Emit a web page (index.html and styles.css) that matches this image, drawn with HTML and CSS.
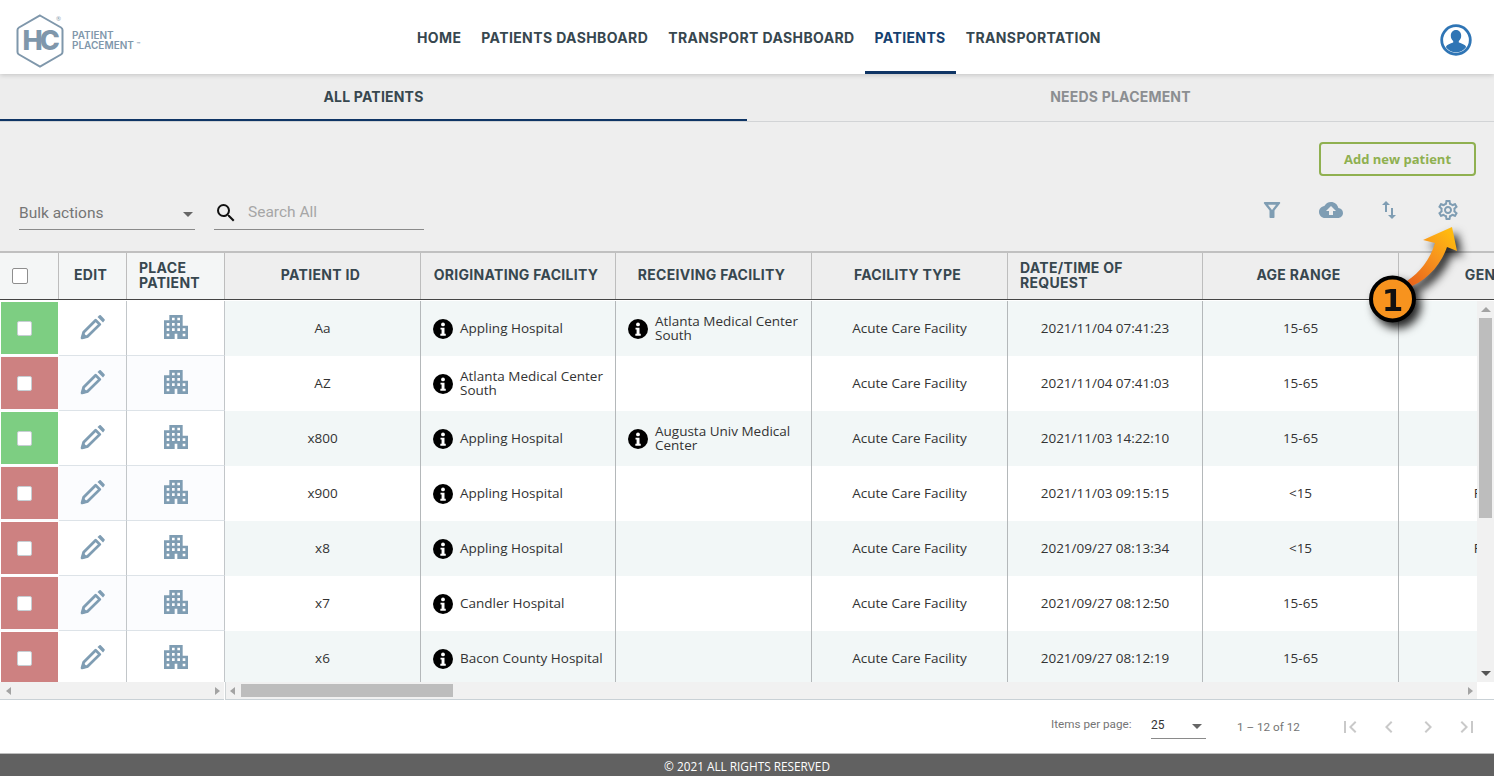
FILE: index.html
```html
<!DOCTYPE html>
<html lang="en">
<head>
<meta charset="utf-8">
<title>Patient Placement</title>
<link rel="stylesheet" href="styles.css">
</head>
<body>
<svg class="defs" width="0" height="0" aria-hidden="true">
  <symbol id="pencil" viewBox="0 0 24 24"><path d="M2 22l1.500-5.400L15 5l4 4L7.400 20.500z" fill="none" stroke="currentColor" stroke-width="2.700" stroke-linejoin="round"/><path d="M16.800 1.800L18.700.3c.4-.3.900-.3 1.200 0l3.700 3.700c.3.300.3.800 0 1.200l-1.500 1.900z" fill="currentColor"/><path d="M.8 23.200l1.800-6.700 4.900 4.900z" fill="currentColor"/></symbol>
  <symbol id="building" viewBox="3 3 18 18"><path d="M17 11V3H7v4H3v14h8v-4h2v4h8V11h-4zM7 19H5v-2h2v2zm0-4H5v-2h2v2zm0-4H5V9h2v2zm4 4H9v-2h2v2zm0-4H9V9h2v2zm0-4H9V5h2v2zm4 8h-2v-2h2v2zm0-4h-2V9h2v2zm0-4h-2V5h2v2zm4 12h-2v-2h2v2zm0-4h-2v-2h2v2z" fill="currentColor"/></symbol>
  <symbol id="info" viewBox="0 0 24 24"><circle cx="12" cy="12" r="12" fill="#000"/><circle cx="12" cy="6.500" r="2.300" fill="#fff"/><path d="M9 10.500h4.800v7.300H15.300v2.200H8.800v-2.200h1.500v-5.100H9z" fill="#fff"/></symbol>
</svg>

<header class="topbar">
  <div class="brand">
    <svg class="brand-mark" viewBox="0 0 48 54" aria-hidden="true">
      <path d="M24 1.500L45 13.500c1 .6 1.500 1.400 1.500 2.500v22c0 1.100-.5 1.900-1.500 2.500L24 52.500 3 40.500C2 39.900 1.500 39.100 1.500 38V16c0-1.100.5-1.900 1.500-2.500z" fill="none" stroke="#7f97ab" stroke-width="2"/>
      <text x="6.500" y="35.500" class="brand-hc">HC</text>
    </svg>
    <span class="brand-reg">®</span>
    <div class="brand-name"><span>PATIENT</span><span>PLACEMENT <small>™</small></span></div>
  </div>
  <nav class="nav">
    <a class="nav-item">HOME</a>
    <a class="nav-item">PATIENTS DASHBOARD</a>
    <a class="nav-item">TRANSPORT DASHBOARD</a>
    <a class="nav-item active">PATIENTS</a>
    <a class="nav-item">TRANSPORTATION</a>
  </nav>
  <svg class="avatar" viewBox="0 0 32 32" aria-hidden="true">
    <circle cx="16" cy="16" r="14.300" fill="#fff" stroke="#2f75b5" stroke-width="2.800"/>
    <path d="M16 6c-3.200 0-5.200 2.500-5.200 5.700 0 2.300 1 4.200 2.400 5.300v1.500c-2.800 1-6.300 1.900-7.400 4.500A12.800 12.800 0 0 0 16 28.500a12.800 12.800 0 0 0 10.200-5.500c-1.100-2.600-4.600-3.500-7.400-4.500V17c1.400-1.100 2.400-3 2.400-5.300C21.200 8.500 19.200 6 16 6z" fill="#2f75b5"/>
  </svg>
</header>

<div class="tabs">
  <div class="tab active">ALL PATIENTS</div>
  <div class="tab">NEEDS PLACEMENT</div>
</div>

<section class="toolbar">
  <div class="toolbar-top"><button class="add-btn">Add new patient</button></div>
  <div class="toolbar-row">
    <div class="bulk"><span>Bulk actions</span><i class="caret"></i></div>
    <div class="search">
      <svg class="search-icon" viewBox="0 0 24 24" aria-hidden="true"><path d="M15.500 14h-.79l-.28-.27A6.470 6.470 0 0 0 16 9.500 6.500 6.500 0 1 0 9.500 16c1.610 0 3.090-.59 4.230-1.570l.27.28v.79l5 4.990L20.490 19l-4.990-5zm-6 0C7.010 14 5 11.990 5 9.500S7.010 5 9.500 5 14 7.010 14 9.500 11.990 14 9.500 14z" fill="#111"/></svg>
      <span>Search All</span>
    </div>
    <div class="tools">
      <svg class="tool" viewBox="0 0 24 24" aria-hidden="true"><path fill-rule="evenodd" d="M4.700 4h14.600c.8 0 1.200.9.700 1.500L14.500 12.500V19c0 .6-.4 1-1 1h-3c-.6 0-1-.4-1-1v-6.500L4 5.500C3.500 4.900 3.900 4 4.700 4zM8 6.800l4 5.100 4-5.100z"/></svg>
      <svg class="tool" viewBox="0 0 24 24" aria-hidden="true"><path d="M19.350 10.040C18.670 6.590 15.640 4 12 4 9.110 4 6.600 5.640 5.350 8.040 2.340 8.360 0 10.910 0 14c0 3.310 2.690 6 6 6h13c2.760 0 5-2.240 5-5 0-2.640-2.050-4.780-4.650-4.960zM14 13v4h-4v-4H7l5-5 5 5h-3z"/></svg>
      <svg class="tool" viewBox="0 0 24 24" aria-hidden="true"><path d="M16 17.010V10h-2v7.010h-3L15 21l4-3.990h-3zM9 3L5 6.990h3V14h2V6.990h3L9 3z"/></svg>
      <svg class="tool" viewBox="0 0 24 24" aria-hidden="true"><path d="M19.430 12.980c.04-.32.07-.64.07-.98 0-.34-.03-.66-.07-.98l2.110-1.650c.19-.15.24-.42.12-.64l-2-3.460c-.09-.16-.26-.25-.44-.25-.06 0-.12.01-.17.03l-2.490 1c-.52-.4-1.080-.73-1.690-.98l-.38-2.650C14.460 2.180 14.250 2 14 2h-4c-.25 0-.46.18-.49.42l-.38 2.650c-.61.25-1.170.59-1.690.98l-2.490-1c-.06-.02-.12-.03-.18-.03-.17 0-.34.09-.43.25l-2 3.460c-.13.22-.07.49.12.64l2.110 1.650c-.04.32-.07.65-.07.98 0 .33.03.66.07.98l-2.110 1.650c-.19.15-.24.42-.12.64l2 3.460c.09.16.26.25.44.25.06 0 .12-.01.17-.03l2.490-1c.52.4 1.080.73 1.690.98l.38 2.650c.03.24.24.42.49.42h4c.25 0 .46-.18.49-.42l.38-2.650c.61-.25 1.170-.59 1.690-.98l2.490 1c.06.02.12.03.18.03.17 0 .34-.09.43-.25l2-3.460c.12-.22.07-.49-.12-.64l-2.110-1.650zm-1.980-1.710c.04.31.05.52.05.73 0 .21-.02.43-.05.73l-.14 1.130.89.7 1.080.84-.7 1.210-1.270-.51-1.040-.42-.9.68c-.43.32-.84.56-1.250.73l-1.060.43-.16 1.130-.2 1.350h-1.400l-.19-1.350-.16-1.130-1.060-.43c-.43-.18-.83-.41-1.230-.71l-.91-.7-1.060.43-1.270.51-.7-1.210 1.080-.84.89-.7-.14-1.130c-.03-.31-.05-.54-.05-.74s.02-.43.05-.73l.14-1.130-.89-.7-1.080-.84.7-1.210 1.270.51 1.040.42.9-.68c.43-.32.84-.56 1.250-.73l1.060-.43.16-1.130.2-1.350h1.390l.19 1.350.16 1.130 1.060.43c.43.18.83.41 1.230.71l.91.7 1.060-.43 1.270-.51.7 1.210-1.070.85-.89.7.14 1.130zM12 8c-2.210 0-4 1.790-4 4s1.790 4 4 4 4-1.790 4-4-1.790-4-4-4zm0 6c-1.100 0-2-.9-2-2s.9-2 2-2 2 .9 2 2-.9 2-2 2z"/></svg>
    </div>
  </div>
</section>

<section class="table">
  <div class="frozen">
    <div class="fz-row head">
      <div class="th fz check-cell"><input class="check head-check" type="checkbox"></div>
      <div class="th fz">EDIT</div>
      <div class="th fz left">PLACE PATIENT</div>
    </div>
    <div class="fz-body">
      <div class="fz-row"><div class="status ok"><input class="check" type="checkbox"></div><div class="act"><svg class="ic-pencil"><use href="#pencil"/></svg></div><div class="act"><svg class="ic-building"><use href="#building"/></svg></div></div>
      <div class="fz-row alt"><div class="status bad"><input class="check" type="checkbox"></div><div class="act"><svg class="ic-pencil"><use href="#pencil"/></svg></div><div class="act"><svg class="ic-building"><use href="#building"/></svg></div></div>
      <div class="fz-row"><div class="status ok"><input class="check" type="checkbox"></div><div class="act"><svg class="ic-pencil"><use href="#pencil"/></svg></div><div class="act"><svg class="ic-building"><use href="#building"/></svg></div></div>
      <div class="fz-row alt"><div class="status bad"><input class="check" type="checkbox"></div><div class="act"><svg class="ic-pencil"><use href="#pencil"/></svg></div><div class="act"><svg class="ic-building"><use href="#building"/></svg></div></div>
      <div class="fz-row"><div class="status bad"><input class="check" type="checkbox"></div><div class="act"><svg class="ic-pencil"><use href="#pencil"/></svg></div><div class="act"><svg class="ic-building"><use href="#building"/></svg></div></div>
      <div class="fz-row alt"><div class="status bad"><input class="check" type="checkbox"></div><div class="act"><svg class="ic-pencil"><use href="#pencil"/></svg></div><div class="act"><svg class="ic-building"><use href="#building"/></svg></div></div>
      <div class="fz-row"><div class="status bad"><input class="check" type="checkbox"></div><div class="act"><svg class="ic-pencil"><use href="#pencil"/></svg></div><div class="act"><svg class="ic-building"><use href="#building"/></svg></div></div>
    </div>
    <div class="hbar short"><i class="tri l"></i><i class="tri r"></i></div>
  </div>

  <div class="main">
    <div class="m-row head">
      <div class="th">PATIENT ID</div>
      <div class="th">ORIGINATING FACILITY</div>
      <div class="th">RECEIVING FACILITY</div>
      <div class="th">FACILITY TYPE</div>
      <div class="th left">DATE/TIME OF REQUEST</div>
      <div class="th">AGE RANGE</div>
      <div class="th">GENDER</div>
    </div>
    <div class="m-body">
      <div class="viewport">
        <div class="m-row"><div class="td">Aa</div><div class="td fac"><svg class="ic-info"><use href="#info"/></svg><span>Appling Hospital</span></div><div class="td fac"><svg class="ic-info"><use href="#info"/></svg><span>Atlanta Medical Center South</span></div><div class="td">Acute Care Facility</div><div class="td">2021/11/04 07:41:23</div><div class="td">15-65</div><div class="td">Male</div></div>
        <div class="m-row alt"><div class="td">AZ</div><div class="td fac"><svg class="ic-info"><use href="#info"/></svg><span>Atlanta Medical Center South</span></div><div class="td fac"></div><div class="td">Acute Care Facility</div><div class="td">2021/11/04 07:41:03</div><div class="td">15-65</div><div class="td">Male</div></div>
        <div class="m-row"><div class="td">x800</div><div class="td fac"><svg class="ic-info"><use href="#info"/></svg><span>Appling Hospital</span></div><div class="td fac"><svg class="ic-info"><use href="#info"/></svg><span>Augusta Univ Medical Center</span></div><div class="td">Acute Care Facility</div><div class="td">2021/11/03 14:22:10</div><div class="td">15-65</div><div class="td">Male</div></div>
        <div class="m-row alt"><div class="td">x900</div><div class="td fac"><svg class="ic-info"><use href="#info"/></svg><span>Appling Hospital</span></div><div class="td fac"></div><div class="td">Acute Care Facility</div><div class="td">2021/11/03 09:15:15</div><div class="td">&lt;15</div><div class="td">Female</div></div>
        <div class="m-row"><div class="td">x8</div><div class="td fac"><svg class="ic-info"><use href="#info"/></svg><span>Appling Hospital</span></div><div class="td fac"></div><div class="td">Acute Care Facility</div><div class="td">2021/09/27 08:13:34</div><div class="td">&lt;15</div><div class="td">Female</div></div>
        <div class="m-row alt"><div class="td">x7</div><div class="td fac"><svg class="ic-info"><use href="#info"/></svg><span>Candler Hospital</span></div><div class="td fac"></div><div class="td">Acute Care Facility</div><div class="td">2021/09/27 08:12:50</div><div class="td">15-65</div><div class="td">Male</div></div>
        <div class="m-row"><div class="td">x6</div><div class="td fac"><svg class="ic-info"><use href="#info"/></svg><span>Bacon County Hospital</span></div><div class="td fac"></div><div class="td">Acute Care Facility</div><div class="td">2021/09/27 08:12:19</div><div class="td">15-65</div><div class="td">Male</div></div>
      </div>
      <div class="vbar"><i class="tri u"></i><div class="vthumb"></div><i class="tri d"></i></div>
    </div>
    <div class="hbar-wrap">
      <div class="hbar"><i class="tri l"></i><div class="hthumb"></div><i class="tri r"></i></div>
    </div>
  </div>
</section>

<section class="paginator">
  <span class="pg-label">Items per page:</span>
  <div class="pg-select"><span>25</span><i class="caret"></i></div>
  <span class="pg-range">1 – 12 of 12</span>
  <div class="pg-btns">
    <svg class="pg-btn" viewBox="0 0 24 24" aria-hidden="true"><path d="M18.410 16.590L13.820 12l4.590-4.590L17 6l-6 6 6 6zM6 6h2v12H6z"/></svg>
    <svg class="pg-btn" viewBox="0 0 24 24" aria-hidden="true"><path d="M15.410 7.410L14 6l-6 6 6 6 1.410-1.410L10.830 12z"/></svg>
    <svg class="pg-btn" viewBox="0 0 24 24" aria-hidden="true"><path d="M10 6L8.590 7.410 13.170 12l-4.580 4.590L10 18l6-6z"/></svg>
    <svg class="pg-btn" viewBox="0 0 24 24" aria-hidden="true"><path d="M5.590 7.410L10.180 12l-4.590 4.590L7 18l6-6-6-6zM16 6h2v12h-2z"/></svg>
  </div>
</section>

<footer class="footer">© 2021 ALL RIGHTS RESERVED</footer>

<svg class="callout" viewBox="0 0 110 110" aria-hidden="true">
  <defs>
    <linearGradient id="arrowfill" x1="0.1" y1="1" x2="0.85" y2="0.1">
      <stop offset="0" stop-color="#e8641b"/>
      <stop offset="0.55" stop-color="#f7931e"/>
      <stop offset="1" stop-color="#ffb90f"/>
    </linearGradient>
  </defs>
  <g class="callout-shadow">
    <path d="M92 7L63 20l12 3C70 40 60 52 47 61l5 5C70 58 82 42 87 27l10 4z" fill="url(#arrowfill)"/>
    <circle cx="32.500" cy="79" r="21.500" fill="#f7931e" stroke="#000" stroke-width="4"/>
    <text x="32.500" y="90.500" class="callout-num">1</text>
  </g>
</svg>
</body>
</html>
```
FILE: styles.css
```css
* { box-sizing: border-box; }
html, body { margin: 0; height: 100%; }
body {
  height: 776px;
  overflow: hidden;
  display: flex;
  flex-direction: column;
  font-family: "Open Sans", "Liberation Sans", sans-serif;
  background: #fff;
  color: #333;
  position: relative;
}
.defs { position: absolute; }

/* Top bar */
.topbar {
  height: 74px;
  flex: none;
  display: flex;
  align-items: stretch;
  background: #fff;
  box-shadow: 0 1px 5px rgba(0, 0, 0, .18);
  position: relative;
  z-index: 2;
}
.brand {
  width: 407px;
  flex: none;
  display: flex;
  align-items: center;
  padding-left: 16px;
  position: relative;
}
.brand-mark { width: 48px; height: 54px; flex: none; margin-top: 7px; }
.brand-hc {
  font-family: Inter, "Liberation Sans", sans-serif;
  font-weight: 800;
  font-size: 27px;
  letter-spacing: -3px;
  fill: #7f97ab;
}
.brand-reg {
  position: absolute;
  left: 56px;
  top: 15px;
  font-size: 6px;
  color: #7f97ab;
}
.brand-name {
  display: flex;
  flex-direction: column;
  margin-left: 8px;
  margin-top: 6px;
  font-family: Inter, "Liberation Sans", sans-serif;
  font-size: 10px;
  line-height: 10px;
  font-weight: 600;
  color: #7f97ab;
}
.brand-name small { font-size: 6px; vertical-align: 2px; }
.nav { display: flex; align-items: stretch; }
.nav-item {
  display: flex;
  align-items: center;
  padding: 4px 10px 0;
  font-family: Inter, "Liberation Sans", sans-serif;
  font-size: 14px;
  font-weight: 700;
  letter-spacing: .38px;
  color: #37474f;
  border-bottom: 3px solid transparent;
  white-space: nowrap;
}
.nav-item.active { color: #15406f; border-bottom-color: #0f3565; }
.avatar { width: 32px; height: 32px; margin: 24px 22px 0 auto; flex: none; }

/* Tabs */
.tabs {
  height: 48px;
  flex: none;
  display: flex;
  background: #ededed;
  border-bottom: 1px solid #d2d4d6;
}
.tab {
  flex: 1;
  display: flex;
  align-items: center;
  justify-content: center;
  height: 47px;
  font-family: Inter, "Liberation Sans", sans-serif;
  font-size: 14px;
  font-weight: 700;
  letter-spacing: .2px;
  color: #8b8e91;
  padding-bottom: 2px;
}
.tab.active { color: #37474f; border-bottom: 2px solid #0f3565; padding-bottom: 0; }

/* Toolbar */
.toolbar {
  height: 129px;
  flex: none;
  background: #eee;
  display: flex;
  flex-direction: column;
}
.toolbar-top {
  display: flex;
  justify-content: flex-end;
  padding: 20px 18px 0 0;
}
.add-btn {
  width: 157px;
  height: 34px;
  border: 2px solid #8fb050;
  border-radius: 4px;
  background: transparent;
  color: #8fb050;
  font-family: "Open Sans", sans-serif;
  font-weight: 700;
  font-size: 13px;
  padding: 0;
}
.toolbar-row {
  display: flex;
  align-items: flex-end;
  height: 54px;
  padding-left: 19px;
}
.bulk {
  width: 176px;
  height: 33px;
  display: flex;
  align-items: center;
  justify-content: space-between;
  padding-right: 2px;
  border-bottom: 1px solid #8a8a8a;
  font-family: Roboto, sans-serif;
  font-size: 15.500px;
  color: #757575;
}
.caret {
  width: 0;
  height: 0;
  border-left: 5px solid transparent;
  border-right: 5px solid transparent;
  border-top: 5px solid #666;
  display: block;
  margin-top: 3px;
}
.search {
  width: 210px;
  height: 33px;
  margin-left: 19px;
  display: flex;
  align-items: center;
  border-bottom: 1px solid #8a8a8a;
  font-family: Roboto, sans-serif;
  font-size: 15.500px;
  color: #a6a6a6;
}
.search-icon { width: 24px; height: 24px; margin-right: 10px; flex: none; }
.search span { margin-top: -2px; }
.tools {
  margin-left: auto;
  display: flex;
  gap: 34.670px;
  padding-right: 34px;
  align-self: flex-end;
  height: 32px;
}
.tool { width: 24px; height: 24px; fill: #7f9db3; flex: none; }

/* Table */
.table {
  height: 449px;
  flex: none;
  display: flex;
  background: #fff;
  border-top: 2px solid #c0c0c0;
}
.frozen { width: 225px; flex: none; display: flex; flex-direction: column; }
.fz-row {
  display: grid;
  grid-template-columns: 59px 68px 98px;
  height: 55px;
}
.head {
  border-bottom: 1px solid #444;
  box-sizing: content-box;
}
.fz-row.head, .m-row.head { height: 46px; margin-bottom: 1px; }
.fz-body { height: 381px; overflow: hidden; }
.fz-row.alt { background: #fbfcfe; }
.th {
  display: flex;
  align-items: center;
  justify-content: center;
  text-align: center;
  padding: 0 14px 4px 10px;
  background: #eee;
  border-right: 1px solid #bdbdbd;
  font-family: Inter, "Liberation Sans", sans-serif;
  font-size: 14px;
  line-height: 15px;
  font-weight: 700;
  letter-spacing: .3px;
  color: #37474f;
  white-space: nowrap;
}
.th.fz { background: #f4f6f6; }
.th.left { justify-content: flex-start; text-align: left; white-space: normal; padding: 0 40px 2px 12px; }
.fz-row .th.left { padding-right: 6px; }
.th.check-cell { justify-content: flex-start; padding: 0 0 0 12px; }
.status {
  display: flex;
  align-items: center;
  padding-left: 16px;
  margin: 1px 1px 2px 1px;
}
.status.ok { background: #7dce82; }
.status.bad { background: #cd8181; }
.act {
  display: flex;
  align-items: center;
  justify-content: center;
  border-right: 1px solid #c2c6c9;
  border-bottom: 1px solid #dde3e8;
  color: #7f9db3;
  padding-bottom: 2px;
}
.ic-pencil { width: 25px; height: 25px; }
.ic-building { width: 24px; height: 24px; }
.check {
  appearance: none;
  margin: 0;
  width: 15px;
  height: 15px;
  background: #fff;
  border: 1px solid #c6ced3;
  border-radius: 2px;
}
.head-check { border-color: #8e8e8e; width: 16px; height: 16px; }

.main { flex: 1; min-width: 0; display: flex; flex-direction: column; overflow: hidden; }
.m-row {
  display: grid;
  grid-template-columns: 196px 195px 196px 196px 195px 196px 196px;
  width: 1370px;
  height: 55px;
  background: #f2f7f7;
}
.m-row.head { background: #eee; }
.m-row.alt { background: #fff; }
.m-body { height: 381px; display: flex; }
.viewport { flex: 1; min-width: 0; overflow: hidden; }
.td {
  display: flex;
  align-items: center;
  justify-content: center;
  text-align: center;
  border-right: 1px solid #b4b8ba;
  font-size: 13.500px;
  line-height: 14px;
  color: #333;
  white-space: nowrap;
  padding-bottom: 2px;
}
.td.fac {
  justify-content: flex-start;
  text-align: left;
  white-space: normal;
  padding-left: 12px;
  padding-right: 6px;
  gap: 7px;
}
.ic-info { width: 20px; height: 20px; flex: none; margin-top: 2px; }

/* Fake scrollbars */
.tri { display: block; width: 0; height: 0; flex: none; border-style: solid; border-color: transparent; }
.tri.l { border-width: 4px 5px 4px 0; border-right-color: #a3a3a3; }
.tri.r { border-width: 4px 0 4px 5px; border-left-color: #a3a3a3; }
.tri.u { border-width: 0 5px 5px 5px; border-bottom-color: #a3a3a3; }
.tri.d { border-width: 5px 5px 0 5px; border-top-color: #555; }
.vbar {
  width: 17px;
  flex: none;
  background: #f1f1f1;
  display: flex;
  flex-direction: column;
  align-items: center;
  padding: 6px 0;
}
.vthumb { width: 13px; height: 200px; background: #bdbdbd; margin-top: 6px; }
.vbar .tri.d { margin-top: auto; }
.hbar-wrap { height: 18px; padding-right: 17px; border-left: 1px solid #cfd4d6; border-bottom: 1px solid #c9d1d6; }
.hbar {
  height: 17px;
  background: #f1f1f1;
  display: flex;
  align-items: center;
  padding: 0 4px;
}
.hbar.short {
  height: 18px;
  justify-content: space-between;
  border-bottom: 1px solid #c9d1d6;
  padding: 0 4px 0 6px;
  margin-right: 1px;
}
.hthumb { width: 212px; height: 13px; background: #bdbdbd; margin-left: 6px; }
.hbar-wrap .tri.r { margin-left: auto; }

/* Paginator */
.paginator {
  height: 53px;
  flex: none;
  display: flex;
  align-items: center;
  padding-left: 1051px;
  background: #fff;
  font-family: Roboto, sans-serif;
  font-size: 12px;
  color: #757575;
}
.pg-label { width: 100px; margin-top: -6px; font-size: 11.700px; flex: none; }
.pg-select {
  width: 55px;
  height: 27px;
  flex: none;
  display: flex;
  align-items: center;
  justify-content: space-between;
  border-bottom: 1px solid #8a8a8a;
  color: #333;
  padding-right: 4px;
  margin-top: -2px;
}
.pg-range { margin-left: 31px; width: 80px; flex: none; margin-top: 1px; font-size: 11.700px; }
.pg-btns { display: flex; gap: 15px; margin-left: 21px; margin-top: 1px; }
.pg-btn { width: 24px; height: 24px; fill: #c9c9c9; flex: none; }

/* Footer */
.footer {
  height: 23px;
  flex: none;
  background: #616161;
  border-top: 1px solid #bdbdbd;
  color: #fff;
  font-size: 11.800px;
  line-height: 25px;
  text-align: center;
}

/* Annotation */
.callout {
  position: absolute;
  left: 1360px;
  top: 220px;
  width: 110px;
  height: 110px;
  overflow: visible;
  z-index: 5;
}
.callout-shadow { filter: drop-shadow(5px 6px 5px rgba(0, 0, 0, .85)); }
.callout-num {
  font-family: "DejaVu Sans", sans-serif;
  font-weight: 700;
  font-size: 31px;
  text-anchor: middle;
  fill: #111;
}
```
